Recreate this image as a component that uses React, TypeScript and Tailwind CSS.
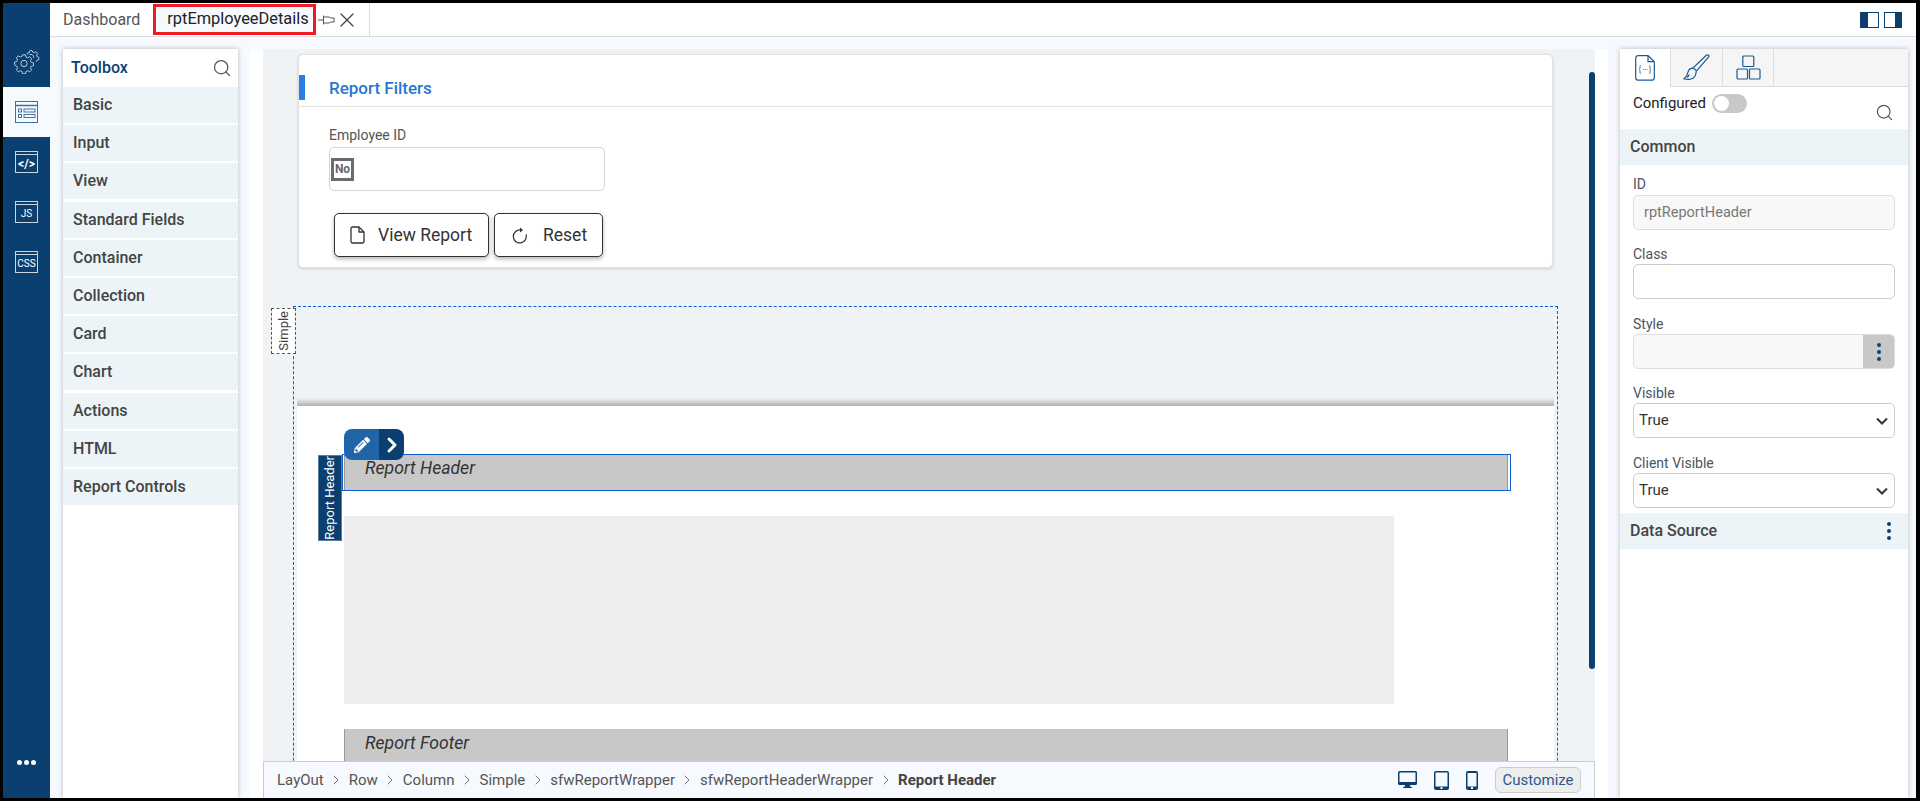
import { ChevronRight, Search, X } from "lucide-react";
import { FaPencilAlt } from "react-icons/fa";

const toolboxItems = [
  "Basic",
  "Input",
  "View",
  "Standard Fields",
  "Container",
  "Collection",
  "Card",
  "Chart",
  "Actions",
  "HTML",
  "Report Controls",
];

const crumbs = [
  "LayOut",
  "Row",
  "Column",
  "Simple",
  "sfwReportWrapper",
  "sfwReportHeaderWrapper",
];

const GearsIcon = () => (
  <svg width="26" height="26" viewBox="0 0 26 26" fill="none" stroke="#b9cbdc" strokeWidth="1">
    <circle cx="10" cy="15.5" r="3.2" />
    <path d="M8.6 6.8h2.8l.5 2.2 1.7.8 2-1.1 2 2-1.1 2 .8 1.700 2.200.5v2.800l-2.200.5-.8 1.700 1.100 2-2 2-2-1.100-1.700.8-.5 2.200H8.600l-.5-2.200-1.700-.8-2 1.100-2-2 1.100-2-.8-1.700L.5 16.900v-2.800l2.200-.5.8-1.700-1.100-2 2-2 2 1.100 1.700-.8z" />
    <path d="M13 6.500l.6-1.600 1.600-.2.4-1.800 2.400-.4.8 1.700 1.600.5 1.600-1 1.700 1.800-1 1.500.5 1.600 1.700.7-.2 2.400-1.800.5-.7 1.500" />
    <path d="M15.500 6.600a3 3 0 0 1 4.200 3.200" />
  </svg>
);

const LayoutIcon = () => (
  <svg width="24" height="23" viewBox="0 0 24 23" fill="none" stroke="#3f729f">
    <rect x="0.5" y="0.5" width="22" height="21" strokeWidth="1" />
    <path d="M1 4.500h21" strokeWidth="1.500" />
    <rect x="3.500" y="8" width="3" height="3" />
    <rect x="3.500" y="13.500" width="3" height="3" />
    <rect x="9" y="8" width="11" height="3" />
    <rect x="9" y="13.500" width="11" height="3" />
  </svg>
);

const RailBox = ({ children }: { children: React.ReactNode }) => (
  <div className="flex h-[22px] w-[23px] flex-col border border-[#c9d6e2] pt-[2px]">
    <div className="h-px w-full bg-[#c9d6e2]" />
    <div className="flex flex-1 items-center justify-center text-[10px] leading-none text-white">
      {children}
    </div>
  </div>
);

const PinIcon = () => (
  <svg width="17" height="12" viewBox="0 0 17 12" fill="none" stroke="#555" strokeWidth="1">
    <path d="M0 6h5M5.500 1.500v9M5.500 3h6l1 1h3.500v4h-3.500l-1 1h-6" />
  </svg>
);

const ResetIcon = () => (
  <svg width="16" height="17" viewBox="0 0 16 17" fill="none" stroke="#333" strokeWidth="1.200">
    <path d="M14 7.500A6.500 6.500 0 1 1 8.500 3" />
    <path d="M8 .5l3 2.500-3 2.500z" fill="#333" stroke="none" />
  </svg>
);

const CodeFileIcon = () => (
  <svg width="20" height="26" viewBox="0 0 20 26" fill="none" stroke="#1d5a92" strokeWidth="1.200">
    <path d="M3 .7h10l6.300 6v16a2.500 2.500 0 0 1-2.500 2.500H3A2.500 2.500 0 0 1 .7 22.700V3A2.500 2.500 0 0 1 3 .7z" />
    <path d="M13 .7v6h6.300" />
    <path d="M6 10.500c-1.500 0-1 1.500-1 2.500s-.7 1.300-1 1.500c.3.2 1 .5 1 1.500s-.5 2.500 1 2.500M14 10.500c1.500 0 1 1.500 1 2.500s.7 1.300 1 1.500c-.3.2-1 .5-1 1.500s.5 2.500-1 2.500" strokeWidth="0.8" />
    <path d="M8 14.500h.8M9.800 14.500h.8M11.600 14.500h.8" strokeWidth="0.9" />
  </svg>
);

const BrushIcon = () => (
  <svg width="27" height="27" viewBox="0 0 27 27" fill="none" stroke="#1d5a92" strokeWidth="1.200">
    <path d="M25.500 1.200c.6.5.5 1.300 0 2L13.500 17l-3.300-3.200L23.300 1.300c.7-.6 1.600-.6 2.200-.1z" />
    <path d="M10 14.200c-2.500 0-4.500 1.600-5 4-.4 2-1.600 5-4 6.600 4 1.200 9 .7 10.800-2.300 1-1.800 1.400-3.300 1.500-5.300" />
    <path d="M3.500 23.500c1.200-.6 2.300-1.600 2.800-3" />
  </svg>
);

const BoxesIcon = () => (
  <svg width="25" height="25" viewBox="0 0 25 25" fill="none" stroke="#1d5a92" strokeWidth="1.200" strokeLinejoin="round">
    <rect x="6.800" y="1" width="11" height="10.500" rx="1" />
    <rect x="1" y="14" width="10.500" height="10" rx="1" />
    <rect x="13.500" y="14" width="10.500" height="10" rx="1" />
  </svg>
);

const DocIcon = () => (
  <svg width="15" height="18" viewBox="0 0 15 18" fill="none" stroke="#333" strokeWidth="1.300" strokeLinejoin="round">
    <path d="M2.500 1h6.500l5 5v9.500a1.500 1.500 0 0 1-1.500 1.500h-10A1.500 1.500 0 0 1 1 15.500v-13A1.500 1.500 0 0 1 2.500 1z" />
    <path d="M9 1v5h5" />
  </svg>
);

const Dots = () => (
  <div className="flex flex-col items-center gap-[3px]">
    <span className="h-1 w-1 rounded-full bg-[#0b3f70]" />
    <span className="h-1 w-1 rounded-full bg-[#0b3f70]" />
    <span className="h-1 w-1 rounded-full bg-[#0b3f70]" />
  </div>
);

const CaretDown = () => (
  <svg width="12" height="8" viewBox="0 0 12 8" fill="none" stroke="#333" strokeWidth="2">
    <path d="M1 1.500l5 5 5-5" />
  </svg>
);

const DesktopIcon = () => (
  <svg width="19" height="18" viewBox="0 0 19 18" fill="#0b3f70">
    <path d="M1.500 0h16A1.500 1.500 0 0 1 19 1.500v11a1.500 1.500 0 0 1-1.500 1.500H12l.5 2H14v1H5v-1h1.500L7 14H1.500A1.500 1.500 0 0 1 0 12.500v-11A1.500 1.500 0 0 1 1.500 0zM1.500 1.500V11h16V1.500z" fillRule="evenodd" />
  </svg>
);

const TabletIcon = () => (
  <svg width="15" height="19" viewBox="0 0 15 19" fill="#0b3f70">
    <path d="M2 0h11a2 2 0 0 1 2 2v15a2 2 0 0 1-2 2H2a2 2 0 0 1-2-2V2a2 2 0 0 1 2-2zM1.500 1.500V15.500h12V1.500zM6.500 16v2h2v-2z" fillRule="evenodd" />
  </svg>
);

const PhoneIcon = () => (
  <svg width="12" height="19" viewBox="0 0 12 19" fill="#0b3f70">
    <path d="M2 0h8a2 2 0 0 1 2 2v15a2 2 0 0 1-2 2H2a2 2 0 0 1-2-2V2a2 2 0 0 1 2-2zM1.500 2V15.500h9V2zM5 16v2h2v-2z" fillRule="evenodd" />
  </svg>
);

const FieldLabel = ({ children, className }: { children: React.ReactNode; className?: string }) => (
  <div className={`h-[20px] text-[14px] leading-[20px] text-[#4a5560] ${className ?? ""}`}>{children}</div>
);

const SelectBox = ({ value }: { value: string }) => (
  <div className="flex h-[35px] items-center justify-between rounded-[5px] border border-[#ccc] bg-white pr-[6px] pl-[5px] text-[15px] text-[#333]">
    <span>{value}</span>
    <CaretDown />
  </div>
);

export default function App() {
  return (
    <div className="flex h-screen w-screen overflow-hidden bg-black pt-[3px] pr-[4px] pb-[3px] pl-[3px] font-[Roboto,sans-serif] text-[#444]">
      {/* side rail */}
      <aside className="flex w-[47px] shrink-0 flex-col items-center bg-[#0b3f70]">
        <div className="flex h-[84px] w-full items-center justify-center pt-[37px] pb-[5px]">
          <GearsIcon />
        </div>
        <div className="flex h-[50px] w-full items-center justify-center bg-[#f6f9fe]">
          <LayoutIcon />
        </div>
        <div className="flex flex-col items-center gap-[28px] pt-[14px]">
          <RailBox>
            <span className="text-[12px] font-bold">&lt;/&gt;</span>
          </RailBox>
          <RailBox>JS</RailBox>
          <RailBox>CSS</RailBox>
        </div>
        <div className="mt-auto mb-[33px] flex gap-[2px]">
          <span className="h-[5px] w-[5px] rounded-full bg-white" />
          <span className="h-[5px] w-[5px] rounded-full bg-white" />
          <span className="h-[5px] w-[5px] rounded-full bg-white" />
        </div>
      </aside>

      <div className="flex min-w-0 flex-1 flex-col">
        {/* tabs */}
        <header className="flex h-[34px] shrink-0 items-stretch border-b border-[#ddd] bg-white">
          <div className="flex w-[103px] items-center pl-[13px] text-[16px] text-[#555]">Dashboard</div>
          <div className="flex items-center border-r border-[#ddd] pr-[10px]">
            <div className="flex h-[31px] w-[163px] items-center justify-center border-[3px] border-[#ed1c24] bg-[#f6f9fe] pl-[7px] text-[16.4px] text-[#222]">
              rptEmployeeDetails
            </div>
            <span className="ml-[2px]">
              <PinIcon />
            </span>
            <X size={24} strokeWidth={1.3} className="text-[#444]" />
          </div>
          <div className="ml-auto flex items-center gap-[5px] pr-[14px]">
            <div className="flex h-[16px] w-[19px] border border-[#0b3f70] bg-white">
              <div className="w-[7px] bg-[#0b3f70]" />
            </div>
            <div className="flex h-[16px] w-[18px] justify-end border border-[#0b3f70] bg-white">
              <div className="w-[6px] bg-[#0b3f70]" />
            </div>
          </div>
        </header>

        <div className="flex min-h-0 flex-1 bg-[#f6f9fe] pt-[12px] pr-[8px] pl-[13px]">
          {/* toolbox */}
          <section className="flex w-[175px] shrink-0 flex-col bg-white shadow-[0_0_5px_rgba(0,0,0,0.25)]">
            <div className="flex h-[38px] shrink-0 items-center justify-between pr-[6px] pl-[8px]">
              <span className="text-[16px] font-medium text-[#0b3f70]">Toolbox</span>
              <Search size={20} strokeWidth={1.5} className="text-[#555]" />
            </div>
            <div className="flex flex-col gap-[2.2px]">
              {toolboxItems.map((item) => (
                <div
                  key={item}
                  className="flex h-[36px] items-center bg-[#edf4f7] pl-[10px] text-[16px] font-medium text-[#444]"
                >
                  {item}
                </div>
              ))}
            </div>
          </section>

          {/* designer */}
          <main className="ml-[12px] flex min-w-0 flex-1 flex-col bg-white px-[13px]">
            <div className="relative min-h-0 flex-1 overflow-hidden bg-[#eff3f6]">
              <div className="absolute top-[23px] right-0 h-[597px] w-[6px] rounded-t-[3px] rounded-b-[3px] bg-[#0b3f70]" />

              <div className="mt-[5px] ml-[35px] w-[1255px] rounded-[5px] border border-[#e2e2e2] bg-white shadow-[0_1px_3px_rgba(0,0,0,0.15)]">
                <div className="relative flex h-[52px] items-end border-b border-[#e2e2e2] pb-[5px] pl-[30px]">
                  <div className="absolute top-[20px] left-0 h-[25px] w-[6px] bg-[#2a7de1]" />
                  <span className="text-[17px] font-medium text-[#2a75d3]">Report Filters</span>
                </div>
                <div className="pt-[18px] pl-[30px]">
                  <div className="h-[22px] text-[14px] text-[#555]">Employee ID</div>
                  <div className="flex h-[44px] w-[276px] items-center rounded-[5px] border border-[#d0d5da] bg-white pl-[1px]">
                    <div className="flex h-[23px] w-[23px] items-center justify-center border-[3px] border-[#6b6b6b] text-[12px] font-bold text-[#666]">
                      No
                    </div>
                  </div>
                  <div className="mt-[22px] flex gap-[5px] pb-[10px] pl-[5px]">
                    <button className="flex h-[44px] w-[155px] items-center rounded-[5px] border border-[#333] bg-white pl-[15px] text-[17.5px] text-[#333] shadow-[0_2px_4px_rgba(0,0,0,0.3)]">
                      <DocIcon />
                      <span className="ml-[13px]">View Report</span>
                    </button>
                    <button className="flex h-[44px] w-[109px] items-center rounded-[5px] border border-[#333] bg-white pl-[17px] text-[17.5px] text-[#333] shadow-[0_2px_4px_rgba(0,0,0,0.3)]">
                      <ResetIcon />
                      <span className="ml-[15px]">Reset</span>
                    </button>
                  </div>
                </div>
              </div>

              {/* design surface */}
              <div className="relative mt-[38px] ml-[30px] w-[1265px] border border-b-0 border-dashed border-[#0b5ed7] px-[3px]">
                <div className="absolute top-[1px] left-[-23px] flex h-[46px] w-[25px] items-center justify-center border border-dashed border-[#555] bg-white">
                  <span className="rotate-180 text-[13px] text-[#444] [writing-mode:vertical-rl]">Simple</span>
                </div>
                <div className="flex h-[99px] flex-col justify-end">
                  <div className="h-[8px] bg-gradient-to-b from-[#eff3f6] to-[#b0b0b0]" />
                </div>
                <div className="bg-white pt-[48px] pb-[60px] pl-[45px]">
                  <div className="relative h-[37px] w-[1169px] border border-[#0b5ed7] pr-[2px] pl-[1px]">
                    <div className="absolute top-0 left-[-25px] flex h-[86px] w-[24px] items-center justify-center border border-[#5b7d9e] bg-[#0b3f70]">
                      <span className="rotate-180 text-[13px] whitespace-nowrap text-white [writing-mode:vertical-rl]">
                        Report Header
                      </span>
                    </div>
                    <div className="absolute top-[-26px] left-[1px] z-10 flex h-[31px] w-[60px] overflow-hidden rounded-[8px]">
                      <div className="flex w-[35px] items-center justify-center bg-[#2065a8]">
                        <FaPencilAlt size={16} className="text-white" />
                      </div>
                      <div className="flex flex-1 items-center justify-center bg-[#0b3f70]">
                        <ChevronRight size={24} strokeWidth={3} className="text-white" />
                      </div>
                    </div>
                    <div className="h-full border-r border-l border-[#999] bg-[#c8c8c8] pl-[20px] text-[17.6px] leading-[27px] text-[#333] italic">
                      Report Header
                    </div>
                  </div>
                  <div className="mt-[25px] ml-[2px] h-[188px] w-[1050px] bg-[#eee]" />
                  <div className="mt-[25px] ml-[2px] h-[37px] w-[1164px] border-r border-l border-[#999] bg-[#c8c8c8] pl-[20px] text-[17.6px] leading-[28px] text-[#333] italic">
                    Report Footer
                  </div>
                </div>
              </div>
            </div>

            {/* breadcrumb */}
            <footer className="flex h-[37px] shrink-0 items-center border-t border-r border-l border-[#ccc] bg-[#f6f9fe] pr-[13px] pl-[13px] text-[15px]">
              {crumbs.map((crumb) => (
                <span key={crumb} className="flex items-center text-[#555]">
                  {crumb}
                  <ChevronRight size={16} strokeWidth={1.5} className="mx-[4.5px] text-[#777]" />
                </span>
              ))}
              <span className="font-bold text-[#444]">Report Header</span>
              <div className="ml-auto flex items-center">
                <DesktopIcon />
                <span className="ml-[17px]">
                  <TabletIcon />
                </span>
                <span className="ml-[17px]">
                  <PhoneIcon />
                </span>
                <button className="ml-[17px] flex h-[26px] w-[86px] items-center justify-center rounded-[6px] border border-[#ccc] bg-[#eee] text-[15px] text-[#2c5a8c]">
                  Customize
                </button>
              </div>
            </footer>
          </main>

          {/* properties */}
          <section className="ml-[12px] flex w-[288px] shrink-0 flex-col bg-white shadow-[0_0_5px_rgba(0,0,0,0.25)]">
            <div className="flex h-[38px] shrink-0 border-b border-[#ddd] bg-[#f5f5f5]">
              <div className="-mb-px flex w-[51px] items-center justify-center border-r border-[#ddd] bg-white">
                <CodeFileIcon />
              </div>
              <div className="flex w-[52px] items-center justify-center border-r border-[#ddd]">
                <BrushIcon />
              </div>
              <div className="flex w-[51px] items-center justify-center border-r border-[#ddd]">
                <BoxesIcon />
              </div>
            </div>
            <div className="relative h-[42px] shrink-0 pl-[13px]">
              <div className="flex h-[32px] items-center">
                <span className="text-[15px] text-[#222]">Configured</span>
                <div className="ml-[6px] h-[19px] w-[35px] rounded-full bg-[#c8c8c8] p-[2px]">
                  <div className="h-[15px] w-[15px] rounded-full bg-white" />
                </div>
              </div>
              <Search size={19} strokeWidth={1.5} className="absolute top-[16px] right-[14px] text-[#555]" />
            </div>
            <div className="flex h-[36px] shrink-0 items-center bg-[#edf4f7] pl-[10px] text-[16px] font-medium text-[#444]">
              Common
            </div>
            <div className="px-[13px] pt-[9px]">
              <FieldLabel className="h-[21px]">ID</FieldLabel>
              <input
                readOnly
                value="rptReportHeader"
                className="h-[35px] w-full rounded-[5px] border border-[#ddd] bg-[#f8f8f8] pl-[10px] text-[14.5px] text-[#777] outline-none"
              />
              <FieldLabel className="mt-[14px]">Class</FieldLabel>
              <input readOnly className="h-[35px] w-full rounded-[5px] border border-[#ccc] bg-white outline-none" />
              <FieldLabel className="mt-[15px]">Style</FieldLabel>
              <div className="flex h-[35px] overflow-hidden rounded-[5px] border border-[#ddd] bg-[#f8f8f8]">
                <div className="ml-auto flex w-[31px] items-center justify-center bg-[#c8c8c8]">
                  <Dots />
                </div>
              </div>
              <FieldLabel className="mt-[14px]">Visible</FieldLabel>
              <SelectBox value="True" />
              <FieldLabel className="mt-[15px]">Client Visible</FieldLabel>
              <SelectBox value="True" />
            </div>
            <div className="mt-[5px] flex h-[36px] shrink-0 items-center justify-between bg-[#edf4f7] pr-[17px] pl-[10px] text-[16px] font-medium text-[#444]">
              Data Source
              <Dots />
            </div>
          </section>
        </div>
      </div>
    </div>
  );
}
